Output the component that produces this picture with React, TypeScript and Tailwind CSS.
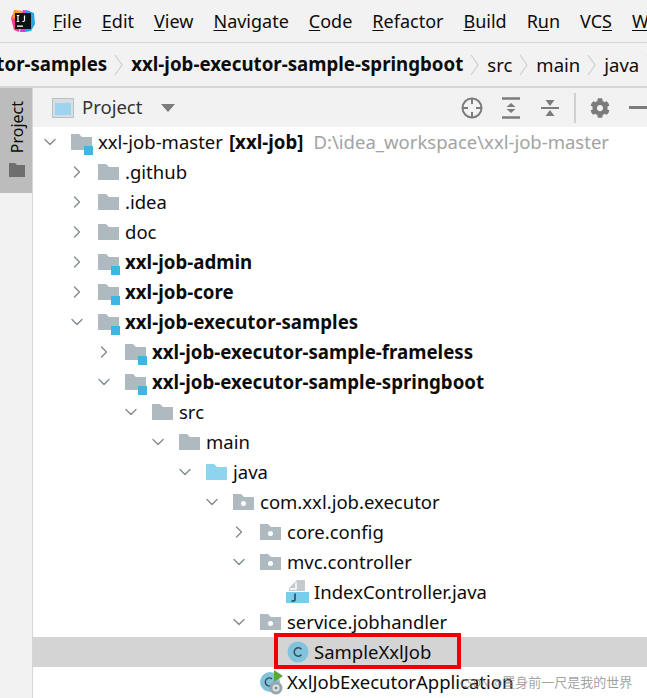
import React from 'react';
import { ChevronDown, ChevronRight } from 'lucide-react';
import { FaCog } from 'react-icons/fa';

type Kind = 'module' | 'folder' | 'source' | 'package' | 'java' | 'class' | 'app';

interface Row {
  depth: number;
  label: string;
  bold?: boolean;
  open?: boolean;
  leaf?: boolean;
  kind: Kind;
  suffix?: string;
  hint?: string;
  selected?: boolean;
}

const rows: Row[] = [
  { depth: 0, label: 'xxl-job-master', kind: 'module', open: true, suffix: '[xxl-job]', hint: 'D:\\idea_workspace\\xxl-job-master' },
  { depth: 1, label: '.github', kind: 'folder' },
  { depth: 1, label: '.idea', kind: 'folder' },
  { depth: 1, label: 'doc', kind: 'folder' },
  { depth: 1, label: 'xxl-job-admin', kind: 'module', bold: true },
  { depth: 1, label: 'xxl-job-core', kind: 'module', bold: true },
  { depth: 1, label: 'xxl-job-executor-samples', kind: 'module', bold: true, open: true },
  { depth: 2, label: 'xxl-job-executor-sample-frameless', kind: 'module', bold: true },
  { depth: 2, label: 'xxl-job-executor-sample-springboot', kind: 'module', bold: true, open: true },
  { depth: 3, label: 'src', kind: 'folder', open: true },
  { depth: 4, label: 'main', kind: 'folder', open: true },
  { depth: 5, label: 'java', kind: 'source', open: true },
  { depth: 6, label: 'com.xxl.job.executor', kind: 'package', open: true },
  { depth: 7, label: 'core.config', kind: 'package' },
  { depth: 7, label: 'mvc.controller', kind: 'package', open: true },
  { depth: 8, label: 'IndexController.java', kind: 'java', leaf: true },
  { depth: 7, label: 'service.jobhandler', kind: 'package', open: true },
  { depth: 8, label: 'SampleXxlJob', kind: 'class', leaf: true, selected: true },
  { depth: 7, label: 'XxlJobExecutorApplication', kind: 'app', leaf: true },
];

const menus = [
  ['', 'F', 'ile'],
  ['', 'E', 'dit'],
  ['', 'V', 'iew'],
  ['', 'N', 'avigate'],
  ['', 'C', 'ode'],
  ['', 'R', 'efactor'],
  ['', 'B', 'uild'],
  ['R', 'u', 'n'],
  ['VC', 'S', ''],
  ['', 'W', 'indow'],
];

const TreeIcon = ({ kind }: { kind: Kind }) => {
  if (kind === 'class') {
    return (
      <svg width="22" height="22" viewBox="0 0 22 22">
        <circle cx="11" cy="11" r="10.5" fill="#7fc4dc" />
        <path d="M14.5 8.2a4.2 4.2 0 1 0 0 5.6" fill="none" stroke="#3b4a52" strokeWidth="1.5" />
      </svg>
    );
  }
  if (kind === 'java') {
    return (
      <svg width="24" height="24" viewBox="0 0 24 24" className="ml-[-1px] overflow-visible">
        <path d="M11 0h8v11H3V8z" fill="#c4cbd0" />
        <path d="M10 2.500v6.500H4" fill="none" stroke="#fff" strokeWidth="1.5" />
        <rect x="0" y="12" width="23" height="11" fill="#7accec" />
        <path d="M9 13.500v6q0 1.500-1.500 1.500H5.500" fill="none" stroke="#24404e" strokeWidth="1.500" />
      </svg>
    );
  }
  if (kind === 'app') {
    return (
      <svg width="24" height="24" viewBox="0 0 24 24" className="overflow-visible">
        <circle cx="10" cy="12" r="10" fill="#7fc4dc" />
        <path d="M12 9a4 4 0 1 0 0 6" fill="none" stroke="#3b4a52" strokeWidth="1.5" />
        <path d="M14 0l9 6-9 6z" fill="#5ba83a" />
        <circle cx="16" cy="18" r="6.500" fill="#9aa5ab" />
        <circle cx="16" cy="18" r="3.500" fill="#dbe6ea" />
        <circle cx="16" cy="18" r="1.500" fill="#7d888e" />
      </svg>
    );
  }
  return (
    <svg width="24" height="22" viewBox="0 0 24 22" className="overflow-visible">
      <path d="M0 3h8l3 3h10v13H0z" fill={kind === 'source' ? '#8fd4ee' : '#aeb9c0'} />
      {kind === 'package' && <circle cx="10.500" cy="12.500" r="2.500" fill="#fff" />}
      {kind === 'module' && <rect x="13" y="15" width="9" height="9" fill="#3db6e6" />}
    </svg>
  );
};

const Crumb = () => (
  <svg width="12" height="24" viewBox="0 0 12 24" className="mx-[6px] shrink-0">
    <path d="M2 2l7 10-7 10" fill="none" stroke="#cfcfcf" strokeWidth="1.2" />
  </svg>
);

const TreeRow = ({ row }: { row: Row }) => (
  <div className={`flex h-[30px] items-center whitespace-nowrap ${row.selected ? 'bg-[#d4d4d4]' : ''}`}>
    <div className="shrink-0" style={{ width: row.depth * 27 + 7 }} />
    <div className="flex w-[20px] shrink-0 justify-center text-[#7f8b91]">
      {row.leaf ? null : row.open ? <ChevronDown size={20} strokeWidth={1.6} /> : <ChevronRight size={20} strokeWidth={1.6} />}
    </div>
    <div className="ml-[11px] flex w-[27px] shrink-0 items-center">
      <TreeIcon kind={row.kind} />
    </div>
    <span className={row.bold ? 'text-[18.7px] font-bold' : 'text-[18.5px]'}>{row.label}</span>
    {row.suffix && <span className="ml-[6px] text-[18.7px] font-bold">{row.suffix}</span>}
    {row.hint && <span className="ml-[10px] text-[18.5px] text-[#a3a3a3]">{row.hint}</span>}
  </div>
);

const App: React.FC = () => {
  return (
    <div className="relative h-[698px] w-[647px] overflow-hidden bg-white font-['Noto_Sans','Noto_Sans_CJK_SC',sans-serif] text-[18.5px] text-[#0c0c0c]">
      {/* Menu bar */}
      <div className="flex h-[43px] items-center overflow-hidden border-b border-[#d6d6d6] bg-[#f2f2f2] pl-[11px] text-[18px] whitespace-nowrap">
        <svg width="24" height="24" viewBox="0 0 24 24" className="mr-[18px] shrink-0">
          <path d="M4 1l8 2-4 20-5-2L0 9z" fill="#f9398f" />
          <path d="M3 1l9 1-3 6-8 2z" fill="#f7a21b" />
          <path d="M12 1l7 1-4 21-6 0z" fill="#d43fd0" />
          <path d="M15 1l8 3 1 11-4 7-6 1z" fill="#1fa7e8" />
          <rect x="4" y="4" width="16" height="16" fill="#111" />
          <rect x="6" y="16.500" width="6" height="1.300" fill="#fff" />
          <path d="M7 6.500v6M5.800 6.500h2.400M5.800 12.500h2.400M13.500 6.500v4.800q0 1.200-1.200 1.200h-1" fill="none" stroke="#fff" strokeWidth="1.200" />
        </svg>
        <div className="flex gap-[20px]">
          {menus.map(([a, u, b]) => (
            <span key={a + u + b}>
              {a}
              <span className="underline underline-offset-2">{u}</span>
              {b}
            </span>
          ))}
        </div>
      </div>

      {/* Breadcrumbs */}
      <div className="flex h-[45px] items-center overflow-hidden border-b-2 border-[#d6d6d6] bg-[#f2f2f2] text-[18.5px] whitespace-nowrap">
        <span className="ml-[-126px] text-[18.7px] font-bold">xxl-job-executor-samples</span>
        <Crumb />
        <span className="text-[18.7px] font-bold">xxl-job-executor-sample-springboot</span>
        <Crumb />
        <span>src</span>
        <Crumb />
        <span>main</span>
        <Crumb />
        <span>java</span>
        <Crumb />
      </div>

      <div className="flex h-[610px]">
        {/* Side tool strip */}
        <div className="w-[33px] shrink-0 border-r border-[#d6d6d6] bg-[#f2f2f2]">
          <div className="flex h-[105px] w-[32px] flex-col items-center justify-end gap-[10px] bg-[#bcbcbc] pb-[16px] pl-[2px]">
            <span className="text-[16px] leading-none [writing-mode:vertical-rl] rotate-180">Project</span>
            <svg width="16" height="14" viewBox="0 0 16 14">
              <path d="M0 0h6l2 2h8v12H0z" fill="#6e6e6e" />
            </svg>
          </div>
        </div>

        <div className="min-w-0 flex-1">
          {/* Tool window header */}
          <div className="flex h-[39px] items-center overflow-hidden bg-[#f2f2f2] pl-[19px]">
            <svg width="22" height="20" viewBox="0 0 22 20" className="shrink-0">
              <rect x="0.500" y="0.500" width="21" height="19" fill="#d8dde0" stroke="#b9c1c6" />
              <rect x="3" y="5" width="16" height="12" fill="#9bd5f0" />
            </svg>
            <span className="mb-[2px] ml-[8px] text-[#333]">Project</span>
            <svg width="14" height="8" viewBox="0 0 14 8" className="ml-[19px] shrink-0">
              <path d="M0 0h14L7 8z" fill="#7c7c7c" />
            </svg>
            <div className="ml-auto flex shrink-0 items-center">
              <svg width="22" height="22" viewBox="0 0 22 22">
                <circle cx="11" cy="11" r="9.500" fill="none" stroke="#7c7c7c" strokeWidth="2" />
                <path d="M11 1v6M11 15v6M1 11h6M15 11h6" stroke="#7c7c7c" strokeWidth="2" />
              </svg>
              <svg width="20" height="22" viewBox="0 0 20 22" className="ml-[18px]">
                <path d="M1 1.500h18M1 20.500h18" stroke="#7c7c7c" strokeWidth="2.400" />
                <path d="M10 6l4.500 4h-9zM10 16l4.500-4h-9z" fill="#7c7c7c" />
              </svg>
              <svg width="20" height="22" viewBox="0 0 20 22" className="ml-[19px]">
                <path d="M1 11h18" stroke="#7c7c7c" strokeWidth="2" />
                <path d="M10 9L5.500 3h9zM10 13l4.500 6h-9z" fill="#7c7c7c" />
              </svg>
              <div className="ml-[14px] h-[30px] w-[2px] bg-[#d0d0d0]" />
              <FaCog size={20} className="ml-[14px] text-[#7c7c7c]" />
              <div className="ml-[19px] mr-[-8px] h-[3px] w-[26px] bg-[#7c7c7c]" />
            </div>
          </div>

          {/* Project tree */}
          <div className="overflow-hidden">
            {rows.map((row) => (
              <TreeRow key={row.label} row={row} />
            ))}
          </div>
        </div>
      </div>

      {/* Highlight box around the file */}
      <div className="absolute left-[274px] top-[633px] h-[36px] w-[187px] border-4 border-[#f00000]" />

      {/* Watermark */}
      <span className="absolute left-[460px] top-[673px] text-[13px] text-[#8a8a8a]/80">
        <span className="text-[11px]">CSDN @</span>置身前一尺是我的世界
      </span>
    </div>
  );
};

export default App;
